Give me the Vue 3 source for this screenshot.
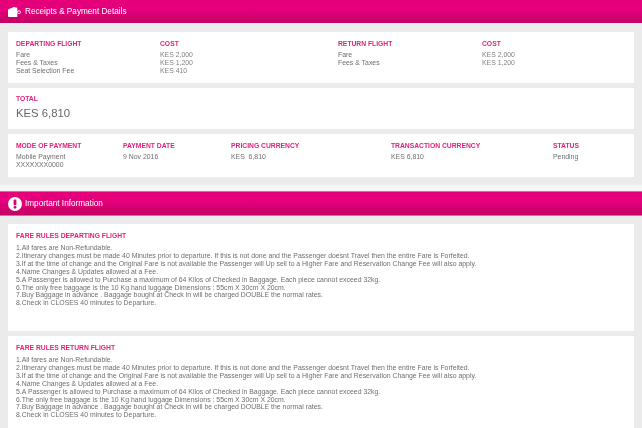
<script setup>
const rules = [
  '1.All fares are Non-Refundable.',
  '2.Itinerary changes must be made 40 Minutes prior to departure. If this is not done and the Passenger doesnt Travel then the entire Fare is Forfeited.',
  '3.If at the time of change and the Original Fare is not available the Passenger will Up sell to a Higher Fare and Reservation Change Fee will also apply.',
  '4.Name Changes & Updates allowed at a Fee.',
  '5.A Passenger is allowed to Purchase a maximum of 64 Kilos of Checked in Baggage. Each piece cannot exceed 32kg.',
  '6.The only free baggage is the 10 Kg hand luggage Dimensions : 55cm X 30cm X 20cm.',
  '7.Buy Baggage in advance . Baggage bought at Check in will be charged DOUBLE the normal rates.',
  '8.Check in CLOSES 40 minutes to Departure.'
]
const flights = [
  { title: 'DEPARTING FLIGHT', names: ['Fare', 'Fees & Taxes', 'Seat Selection Fee'], costs: ['KES 2,000', 'KES 1,200', 'KES 410'] },
  { title: 'RETURN FLIGHT', names: ['Fare', 'Fees & Taxes'], costs: ['KES 2,000', 'KES 1,200'] }
]
const payment = [
  { label: 'MODE OF PAYMENT', lines: ['Mobile Payment', 'XXXXXXX0000'] },
  { label: 'PAYMENT DATE', lines: ['9 Nov 2016'] },
  { label: 'PRICING CURRENCY', lines: ['KES  6,810'] },
  { label: 'TRANSACTION CURRENCY', lines: ['KES 6,810'] },
  { label: 'STATUS', lines: ['Pending'] }
]
const fareCards = ['FARE RULES DEPARTING FLIGHT', 'FARE RULES RETURN FLIGHT']
</script>

<template>
  <div class="page">
    <header class="bar bar-first">
      <svg class="wallet" width="13" height="10" viewBox="0 0 13 10">
        <path d="M0 3.2 Q0 2.4 1 2 L6 0 Q7 -0.2 7.5 0.4 H8.5 Q9.3 0.4 9.3 1.4 V10 H1 Q0 10 0 9 Z" fill="#fff" />
        <circle cx="11" cy="5.2" r="1.5" fill="none" stroke="#fff" stroke-width="0.9" />
      </svg>
      <span>Receipts &amp; Payment Details</span>
    </header>

    <section class="card flights">
      <template v-for="f in flights" :key="f.title">
        <div class="col">
          <h4>{{ f.title }}</h4>
          <p v-for="n in f.names" :key="n">{{ n }}</p>
        </div>
        <div class="col">
          <h4>COST</h4>
          <p v-for="c in f.costs" :key="c" class="light">{{ c }}</p>
        </div>
      </template>
    </section>

    <section class="card total">
      <h4>TOTAL</h4>
      <div class="amount">KES 6,810</div>
    </section>

    <section class="card payment">
      <div v-for="p in payment" :key="p.label" class="col">
        <h4>{{ p.label }}</h4>
        <p v-for="l in p.lines" :key="l" class="pre">{{ l }}</p>
      </div>
    </section>

    <header class="bar bar-second">
      <svg width="14" height="14" viewBox="0 0 14 14">
        <circle cx="7" cy="7" r="7" fill="#fff" />
        <rect x="5.6" y="2.6" width="2.8" height="5.6" rx="1" fill="#d9006f" />
        <circle cx="7" cy="10.3" r="1.4" fill="#d9006f" />
      </svg>
      <span>Important Information</span>
    </header>

    <section v-for="(t, i) in fareCards" :key="t" class="card rules" :class="{ last: i === 1 }">
      <h4>{{ t }}</h4>
      <p v-for="r in rules" :key="r">{{ r }}</p>
    </section>
  </div>
</template>

<style>
html, body { margin: 0; background: #ebebeb; overflow: hidden; }
</style>

<style scoped>
.page {
  width: 642px;
  height: 428px;
  overflow: hidden;
  background: #ebebeb;
  font-family: "Liberation Sans", Arial, sans-serif;
  color: #6e6e6e;
  filter: blur(0.3px);
}
h4 {
  margin: 0;
  font-size: 6.75px;
  line-height: 8px;
  font-weight: 700;
  color: #e0217f;
}
p {
  margin: 0;
  font-size: 6.9px;
  line-height: 8px;
}
.pre { white-space: pre; }
.light { color: #828282; }
.bar {
  display: flex;
  align-items: center;
  color: #fff;
  font-size: 8.2px;
  background: linear-gradient(#e6007a 0%, #e3007a 45%, #c20062 100%);
}
.bar-first {
  height: 23px;
  padding-left: 8px;
  gap: 4px;
}
.bar-second {
  height: 25px;
  margin-top: 14px;
  padding-left: 8px;
  gap: 3px;
  border-top: 1px solid #f55aa8;
  border-bottom: 1px solid #f55aa8;
  box-sizing: border-box;
  box-shadow: 0 -6px 0 #f6f6f6;
}
.card {
  background: #fff;
  margin: 5px 8px 0;
  padding: 8px;
  box-sizing: border-box;
}
.flights {
  height: 51px;
  margin-top: 9px;
  padding-top: 8px;
  display: grid;
  grid-template-columns: 144px 178px 144px 1fr;
}
.flights h4 { margin-bottom: 3px; }
.total { height: 41px; padding-top: 7px; }
.amount {
  margin-top: 3px;
  font-size: 11.3px;
  line-height: 14px;
  color: #666;
}
.payment {
  height: 43px;
  display: grid;
  grid-template-columns: 107px 108px 160px 162px 1fr;
}
.payment h4 { margin-bottom: 3px; }
.rules {
  height: 107px;
  margin-top: 8px;
  padding-top: 8px;
}
.rules.last { margin-top: 5px; height: 100px; }
.rules h4 { margin-bottom: 4px; line-height: 8px; }
.rules p { font-size: 6.9px; line-height: 7.9px; }
</style>
